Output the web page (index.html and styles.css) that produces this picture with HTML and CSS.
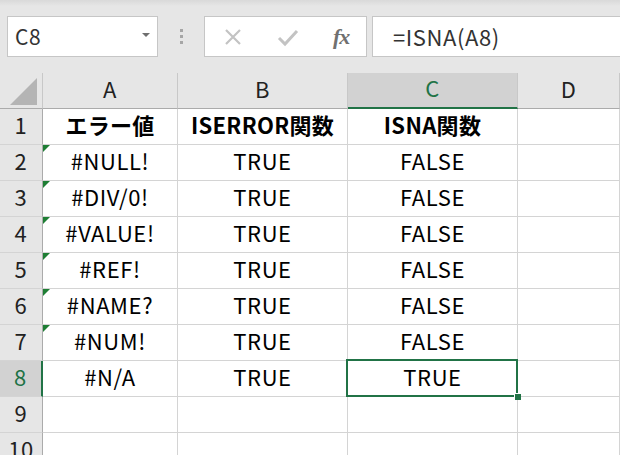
FILE: index.html
```html
<!DOCTYPE html>
<html lang="ja">
<head>
<meta charset="utf-8">
<title>ISNA</title>
<link rel="stylesheet" href="styles.css">
</head>
<body>
<div class="toolbar">
  <div class="namebox">
    <span class="name">C8</span>
    <svg class="dd" width="8" height="5" viewBox="0 0 8 5"><path d="M0 0H8L4 4Z" fill="#6f6f6f"/></svg>
  </div>
  <div class="dots"><i></i><i></i><i></i></div>
  <div class="fbuttons">
    <svg class="btn-x" width="20" height="20" viewBox="0 0 20 20"><path d="M3 3L17 17M17 3L3 17" stroke="#c3c3c3" stroke-width="2.2" fill="none"/></svg>
    <svg class="btn-ok" width="22" height="20" viewBox="0 0 22 20"><path d="M2 10L8 16L20 3" stroke="#c3c3c3" stroke-width="3" fill="none"/></svg>
    <span class="fx">fx</span>
  </div>
  <div class="formula">=ISNA(A8)</div>
</div>
<div class="sheet">
  <div class="corner"><svg width="30" height="30" viewBox="0 0 30 30"><path d="M28 2V29H1Z" fill="#b4b4b4"/></svg></div>
  <div class="ch">A</div><div class="ch">B</div><div class="ch sel">C</div><div class="ch">D</div>

  <div class="rh">1</div><div class="c b">エラー値</div><div class="c b">ISERROR関数</div><div class="c b">ISNA関数</div><div class="c"></div>
  <div class="rh">2</div><div class="c err">#NULL!</div><div class="c">TRUE</div><div class="c">FALSE</div><div class="c"></div>
  <div class="rh">3</div><div class="c err">#DIV/0!</div><div class="c">TRUE</div><div class="c">FALSE</div><div class="c"></div>
  <div class="rh">4</div><div class="c err">#VALUE!</div><div class="c">TRUE</div><div class="c">FALSE</div><div class="c"></div>
  <div class="rh">5</div><div class="c err">#REF!</div><div class="c">TRUE</div><div class="c">FALSE</div><div class="c"></div>
  <div class="rh">6</div><div class="c err">#NAME?</div><div class="c">TRUE</div><div class="c">FALSE</div><div class="c"></div>
  <div class="rh">7</div><div class="c err">#NUM!</div><div class="c">TRUE</div><div class="c">FALSE</div><div class="c"></div>
  <div class="rh sel">8</div><div class="c">#N/A</div><div class="c">TRUE</div><div class="c active">TRUE<span class="selbox"></span><span class="handle"></span></div><div class="c"></div>
  <div class="rh">9</div><div class="c"></div><div class="c"></div><div class="c"></div><div class="c"></div>
  <div class="rh">10</div><div class="c"></div><div class="c"></div><div class="c"></div><div class="c"></div>
</div>
</body>
</html>
```
FILE: styles.css
```css
* { box-sizing: border-box; }
html, body { margin: 0; padding: 0; }
body {
  width: 620px;
  height: 455px;
  overflow: hidden;
  background: #e6e6e6;
  font-family: "Noto Sans CJK JP", "Noto Sans", sans-serif;
  color: #000;
}
.toolbar {
  height: 73px;
  padding: 16px 0 16px 7px;
  display: flex;
  align-items: stretch;
  background: linear-gradient(#d9d9d9, #e6e6e6 6px);
}
.namebox {
  width: 151px;
  background: #fff;
  border: 1px solid #c6c6c6;
  display: flex;
  align-items: center;
  justify-content: space-between;
  padding: 0 7px 0 7px;
}
.name { font-size: 21px; color: #333; line-height: 1; letter-spacing: 0.5px; }
.dd { margin-top: -3px; }
.dots {
  width: 46px;
  display: flex;
  flex-direction: column;
  align-items: center;
  justify-content: center;
  gap: 3px;
  padding-bottom: 1px;
}
.dots i { display: block; width: 3px; height: 3px; background: #a6a6a6; }
.fbuttons {
  width: 163px;
  background: #fff;
  border: 1px solid #c6c6c6;
  display: flex;
  align-items: center;
  padding-left: 18px;
}
.btn-x { margin-right: 34px; }
.btn-ok { margin-right: 34px; margin-top: 2px; }
.fx {
  font-family: "Liberation Serif", serif;
  font-style: italic;
  font-weight: bold;
  font-size: 22px;
  color: #707070;
  letter-spacing: -1px;
}
.formula {
  flex: 1;
  margin-left: 5px;
  background: #fff;
  border: 1px solid #c6c6c6;
  border-right: 0;
  display: flex;
  align-items: center;
  padding-left: 20px;
  padding-bottom: 2px;
  font-size: 22px;
  letter-spacing: 0.6px;
  color: #333;
}
.sheet {
  display: grid;
  grid-template-columns: 43px 135px 170px 170px 1fr;
  grid-auto-rows: 36px;
}
.sheet > div {
  display: flex;
  align-items: center;
  justify-content: center;
  font-size: 22px;
  line-height: 1;
  letter-spacing: 0.6px;
  padding-bottom: 6px;
}
.sheet > .corner {
  border-right: 1px solid #c8c8c8;
  border-bottom: 1px solid #ababab;
  background: #e6e6e6;
  align-items: flex-end;
  justify-content: flex-end;
  padding: 0 3px 2px 0;
}
.corner svg { display: block; }
.ch {
  background: #e6e6e6;
  border-right: 1px solid #c8c8c8;
  border-bottom: 1px solid #ababab;
  color: #222;
}
.ch.sel {
  background: #d2d2d2;
  color: #217346;
  border-bottom: 2px solid #217346;
}
.rh {
  background: #e6e6e6;
  border-right: 1px solid #ababab;
  border-bottom: 1px solid #d4d4d4;
  color: #222;
}
.rh.sel {
  background: #d2d2d2;
  color: #217346;
  border-right: 2px solid #217346;
}
.c {
  background: #fff;
  border-right: 1px solid #d4d4d4;
  border-bottom: 1px solid #d4d4d4;
  position: relative;
  white-space: nowrap;
}
.c.b { font-weight: bold; letter-spacing: 0.3px; }
.c.active { z-index: 2; }
.err::before {
  content: "";
  position: absolute;
  left: 0;
  top: 0;
  border-top: 7px solid #1e7e34;
  border-right: 7px solid transparent;
}
.selbox {
  position: absolute;
  left: -2px;
  top: -2px;
  right: -1px;
  bottom: -1px;
  border: 2px solid #217346;
}
.handle {
  position: absolute;
  right: -4px;
  bottom: -4px;
  width: 7px;
  height: 7px;
  background: #217346;
  border-left: 1px solid #fff;
  border-top: 1px solid #fff;
}
```
